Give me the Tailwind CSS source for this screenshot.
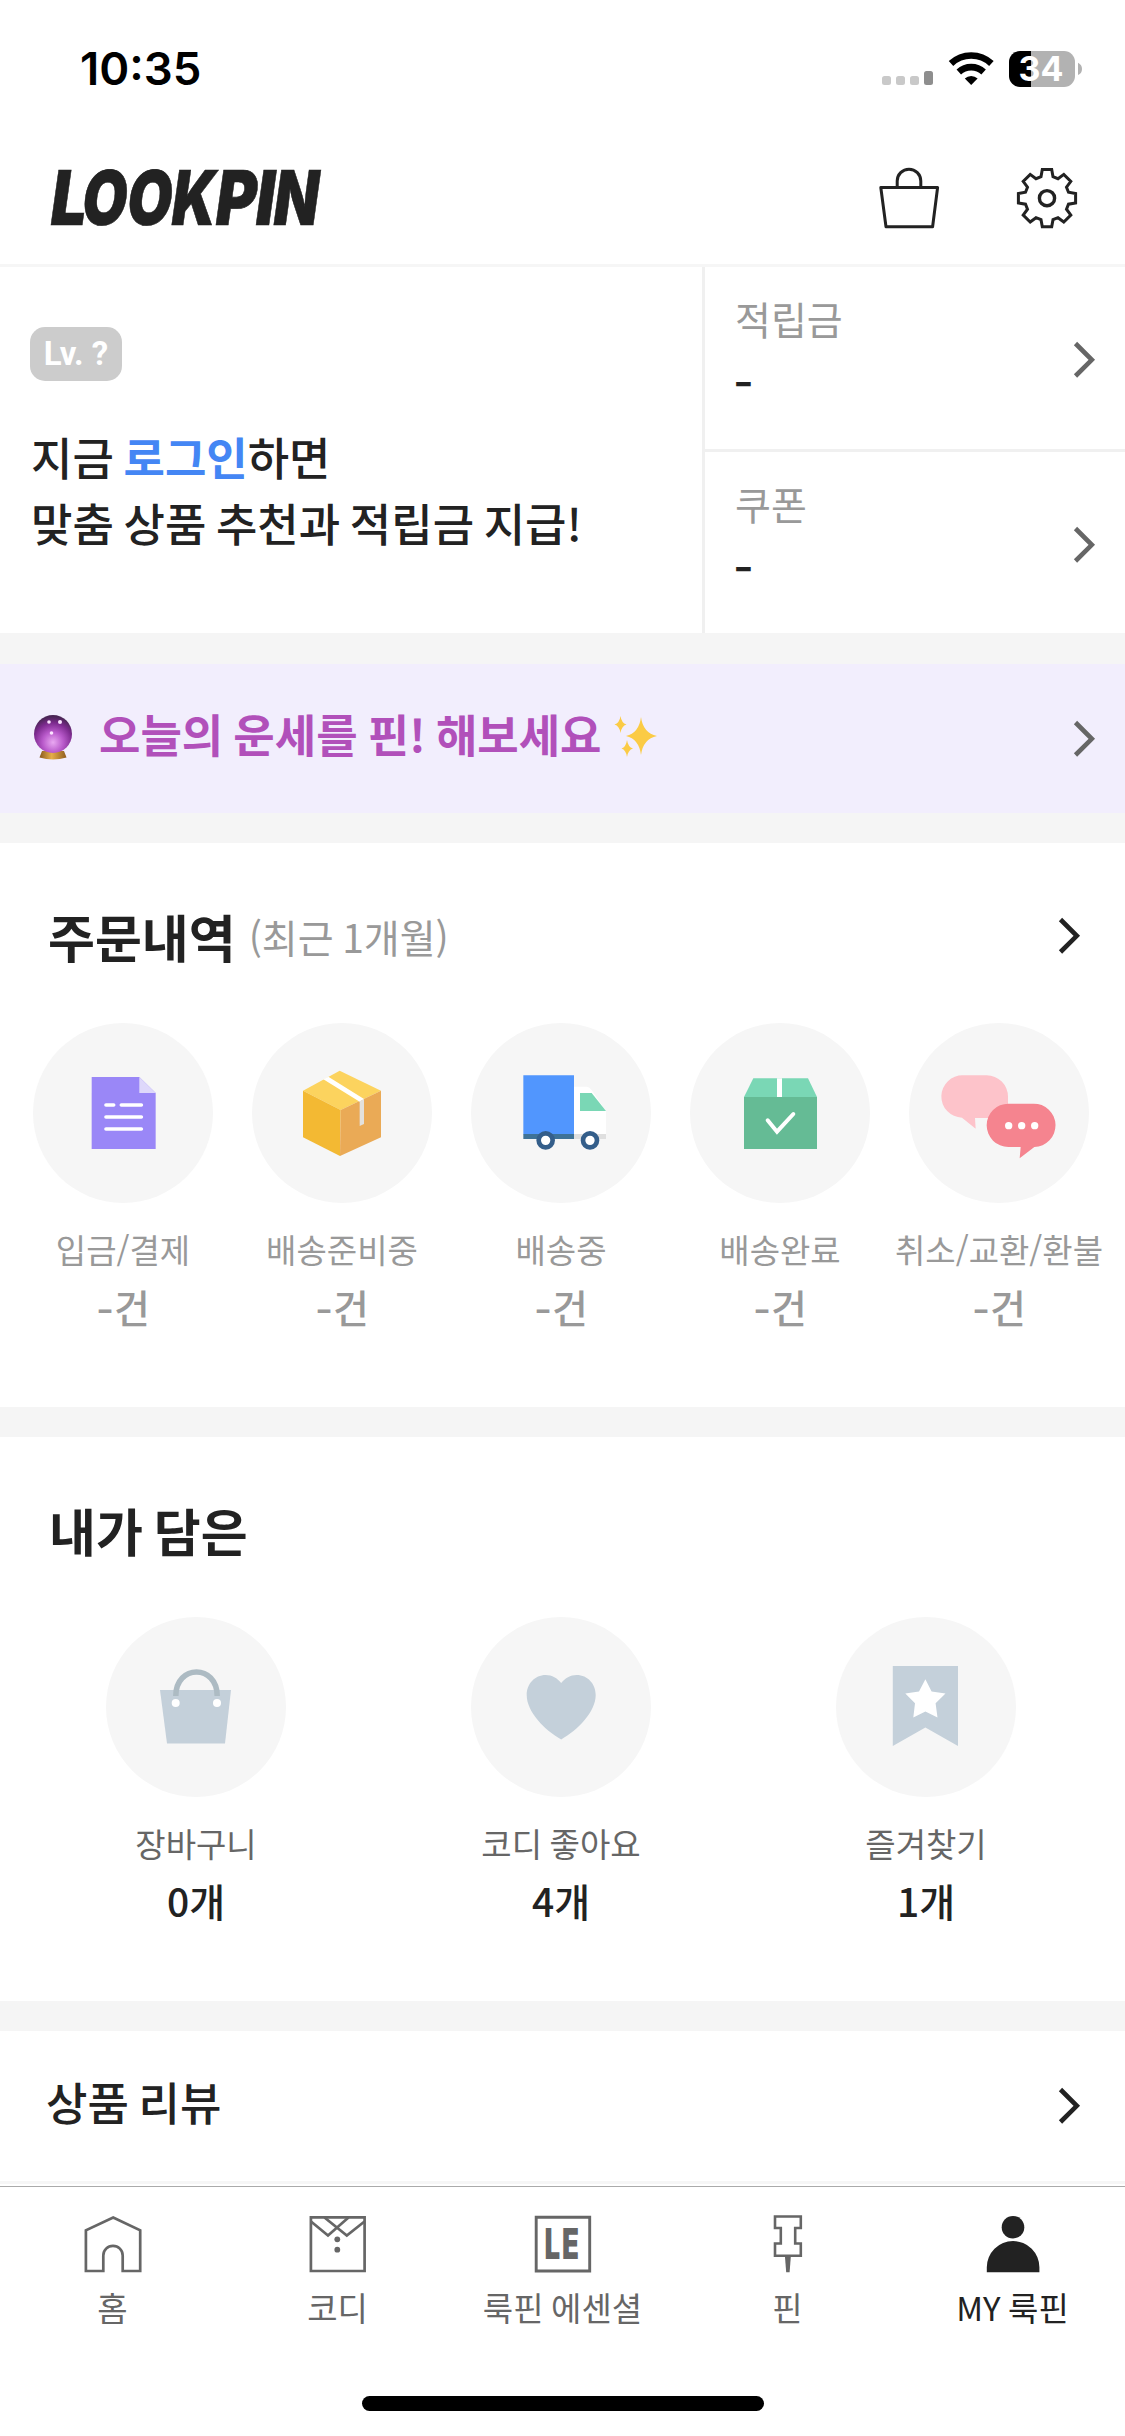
<!DOCTYPE html>
<html lang="ko">
<head>
<meta charset="utf-8">
<title>MY 룩핀</title>
<script src="https://cdn.jsdelivr.net/npm/@tailwindcss/browser@4"></script>
</head>
<body class="bg-white">
<div class="flex h-[2436px] w-[1125px] flex-col overflow-hidden bg-white font-['Noto_Sans_CJK_KR',sans-serif] text-[#222]">

  <!-- Status bar -->
  <div class="flex h-[132px] shrink-0 items-start justify-between pr-[43px] pl-[80px]">
    <div class="mt-[41px] font-['Inter',sans-serif] text-[45.5px] leading-[56px] font-semibold text-black">10:35</div>
    <svg class="mt-[46px] h-[46px] w-[201px]" viewBox="881 46 201 46">
      <g fill="#c9c9c9"><rect x="882" y="76" width="9" height="9" rx="2.5"/><rect x="896" y="76" width="9" height="9" rx="2.5"/><rect x="910" y="76" width="9" height="9" rx="2.5"/></g>
      <rect x="924" y="71" width="9" height="14" rx="2.5" fill="#8e8e8e"/>
      <g fill="none" stroke="#000" stroke-width="6.6">
        <path d="M951 63.5a29.5 29.5 0 0 1 40.4 0"/>
        <path d="M958.8 72a18.2 18.2 0 0 1 24.8 0"/>
      </g>
      <path d="M971.2 85l-6.4-6.4a9.4 9.4 0 0 1 12.8 0z"/>
      <path d="M1020 51h11v36h-11a11 11 0 0 1-11-11V62a11 11 0 0 1 11-11z"/>
      <path d="M1031 51h33a11 11 0 0 1 11 11v14a11 11 0 0 1-11 11h-33z" fill="#b2b2b2"/>
      <path d="M1078 62.7q4 2 4 6.2t-4 6.2z" fill="#b2b2b2"/>
      <text x="1041" y="81.3" text-anchor="middle" font-family="Inter" font-weight="700" font-size="34" fill="#fff">34</text>
    </svg>
  </div>

  <!-- App header -->
  <header class="flex h-[135px] shrink-0 items-start justify-between border-b-[3px] border-[#f6f6f6] pr-[47px] pl-[50px]">
    <svg class="mt-[17px] h-[98px] w-[290px] overflow-visible" viewBox="50 149 290 98" aria-label="LOOKPIN">
      <g font-family="Inter" font-weight="900" font-size="75.500" fill="#222" stroke="#222" stroke-width=".6" transform="translate(0 225) skewX(-8)">
        <text x="48" textLength="36" lengthAdjust="spacingAndGlyphs">L</text>
        <text x="79.500" textLength="45" lengthAdjust="spacingAndGlyphs">O</text>
        <text x="124.500" textLength="45" lengthAdjust="spacingAndGlyphs">O</text>
        <text x="169" textLength="44" lengthAdjust="spacingAndGlyphs">K</text>
        <text x="213" textLength="41" lengthAdjust="spacingAndGlyphs">P</text>
        <text x="253" textLength="19" lengthAdjust="spacingAndGlyphs">I</text>
        <text x="271" textLength="45" lengthAdjust="spacingAndGlyphs">N</text>
      </g>
    </svg>
    <div class="mt-[35px] flex gap-[76px]">
      <svg class="h-[63px] w-[62px]" viewBox="878 167 62 63" fill="none" stroke="#222" stroke-width="3">
        <path d="M880.8 187.5h56.8l-5 39.3h-46.6z" stroke-linejoin="round"/>
        <path d="M897.2 187v-6a11.8 11.8 0 0 1 23.6 0v6"/>
      </svg>
      <svg class="h-[63px] w-[62px]" viewBox="-31 -31.2 62 63" fill="none" stroke="#222" stroke-width="3">
        <path d="M-4.7-28.6H4.7L6-21.5 11-19.5 16.8-23.8 23.8-16.8 19.5-11 21.5-6 28.6-4.7V4.7L21.5 6 19.5 11 23.8 16.8 16.8 23.8 11 19.5 6 21.5 4.7 28.6H-4.7L-6 21.5-11 19.5-16.8 23.8-23.8 16.8-19.5 11-21.5 6-28.6 4.7V-4.7L-21.5-6-19.5-11-23.8-16.8-16.8-23.8-11-19.5-6-21.5z"/>
        <circle r="7.6" stroke-width="3.4"/>
      </svg>
    </div>
  </header>

  <!-- Profile -->
  <section class="flex h-[366px] shrink-0">
    <div class="flex w-[702px] flex-col items-start pt-[60px] pl-[30px]">
      <span class="h-[54px] w-[92px] rounded-[15px] bg-[#ccc] text-center font-['Roboto',sans-serif] text-[33px] leading-[54px] font-bold text-white">Lv. ?</span>
      <p class="mt-[43px] pl-[1px] text-[45px] leading-[66px] font-medium [word-spacing:-0.065em]">지금 <a class="font-bold text-[#4486f4]">로그인</a>하면<br>맞춤 상품 추천과 적립금 지급!</p>
    </div>
    <div class="flex flex-1 flex-col border-l-[3px] border-[#f0f0f0]">
      <div class="flex h-[185px] items-start justify-between border-b-[3px] border-[#f0f0f0] pr-[28px] pl-[30px]">
        <div class="pt-[23px]">
          <div class="text-[39px] leading-[56px] text-[#999]">적립금</div>
          <div class="text-[45px] leading-[66px] font-medium"><span class="-ml-[2px] font-['Inter']">-</span></div>
        </div>
        <svg class="mt-[73px] h-[40px] w-[24px]" viewBox="0 0 24 40" fill="none" stroke="#666" stroke-width="4.6"><path d="M2.5 3.5l16.3 16.3L2.5 36"/></svg>
      </div>
      <div class="flex h-[181px] items-start justify-between pr-[28px] pl-[30px]">
        <div class="pt-[23px]">
          <div class="text-[39px] leading-[56px] text-[#999]">쿠폰</div>
          <div class="text-[45px] leading-[66px] font-medium"><span class="-ml-[2px] font-['Inter']">-</span></div>
        </div>
        <svg class="mt-[73px] h-[40px] w-[24px]" viewBox="0 0 24 40" fill="none" stroke="#666" stroke-width="4.6"><path d="M2.5 3.5l16.3 16.3L2.5 36"/></svg>
      </div>
    </div>
  </section>

  <!-- Fortune banner -->
  <section class="box-content flex h-[149px] shrink-0 items-center border-t-[31px] border-b-[30px] border-[#f5f5f5] bg-[#f2eefd] pl-[33px]">
    <svg class="mb-[4px] h-[46px] w-[40px]" viewBox="0 0 40 46">
      <defs>
        <radialGradient id="ball" cx=".5" cy=".72" r=".68"><stop offset="0" stop-color="#e9a8f2"/><stop offset=".4" stop-color="#b95acb"/><stop offset=".75" stop-color="#7d2a8f"/><stop offset="1" stop-color="#4a2555"/></radialGradient>
        <linearGradient id="stand"><stop offset="0" stop-color="#8a5a1c"/><stop offset=".45" stop-color="#e5ae49"/><stop offset="1" stop-color="#8f5b1e"/></linearGradient>
      </defs>
      <path d="M9 37h22l2.500 6.500q-13.500 4-27 0z" fill="url(#stand)"/>
      <circle cx="20" cy="20" r="19" fill="url(#ball)"/>
      <g fill="#fbe4ff"><circle cx="16" cy="8" r="1.800"/><circle cx="27" cy="8" r="2"/><circle cx="18.500" cy="19" r="1.800"/></g>
    </svg>
    <p class="ml-[26px] pb-[9px] text-[45px] leading-[60px] font-bold whitespace-nowrap text-[#b150ba] [word-spacing:-0.055em]">오늘의 운세를 핀! 해보세요</p>
    <svg class="mb-[6px] ml-[11px] h-[44px] w-[44px]" viewBox="0 0 44 44" fill="#fbcb45">
      <path d="M28 3q2 16 16 19-14 3-16 19-2-16-15-19 13-3 15-19z"/>
      <path d="M7.500 2q1 7 6 8.500-5 1.500-6 8.500-1-7-6-8.500 5-1.500 6-8.500z"/>
      <path d="M14 26q1 7 6 8.500-5 1.500-6 8.500-1-7-5.500-8.500 4.500-1.500 5.500-8.500z"/>
    </svg>
    <svg class="mr-[28px] ml-auto h-[40px] w-[24px]" viewBox="0 0 24 40" fill="none" stroke="#666" stroke-width="4.6"><path d="M2.5 3.5l16.3 16.3L2.5 36"/></svg>
  </section>

  <!-- Orders -->
  <section class="h-[564px] shrink-0 pt-[53px]">
    <div class="flex h-[80px] items-center pr-[43px] pl-[48px]">
      <h2 class="text-[51px] font-bold">주문내역</h2>
      <span class="ml-[13px] text-[39px] text-[#999] [word-spacing:-0.06em]">(최근 1개월)</span>
      <svg class="ml-auto h-[40px] w-[24px]" viewBox="0 0 24 40" fill="none" stroke="#222" stroke-width="4.6"><path d="M2.5 3.5l16.3 16.3L2.5 36"/></svg>
    </div>
    <div class="mt-[47px] grid w-[1108.5px] grid-cols-5 pl-[13.5px] text-center text-[#999]">
      <div class="flex flex-col items-center">
        <svg class="size-[180px] rounded-full bg-[#f6f6f6]" viewBox="99 69 540 540">
          <path d="M275 231h143l49 48v168H275z" fill="#9a87f7"/>
          <path d="M418 231l49 48h-49z" fill="#ded8fb"/>
          <path d="M318 315h23M364 315h60M318 351h106M318 387h106" stroke="#fff" stroke-width="11" stroke-linecap="round"/>
        </svg>
        <div class="mt-[22px] text-[33px] leading-[48px] whitespace-nowrap">입금/결제</div>
        <div class="h-[66px] text-[39px] leading-[66px] font-medium"><span class="font-['Inter']">-</span>건</div>
      </div>
      <div class="flex flex-col items-center">
        <svg class="size-[180px] rounded-full bg-[#f6f6f6]" viewBox="756 69 540 540">
          <path d="M1019 212l124 60-121 58-113-58z" fill="#fcd35e"/>
          <path d="M909 272l113 58-2 138-111-56z" fill="#f3b933"/>
          <path d="M1143 272v140l-123 56 2-138z" fill="#eaaa56"/>
          <path d="M970 238l15-8 107 67-13 8z" fill="#fff"/>
          <path d="M1079 304l13-7v75l-13 6z" fill="#e3e1dd"/>
        </svg>
        <div class="mt-[22px] text-[33px] leading-[48px] whitespace-nowrap">배송준비중</div>
        <div class="h-[66px] text-[39px] leading-[66px] font-medium"><span class="font-['Inter']">-</span>건</div>
      </div>
      <div class="flex flex-col items-center">
        <svg class="size-[180px] rounded-full bg-[#f6f6f6]" viewBox="63 69 540 540">
          <path d="M220 226h152v177H220z" fill="#5196fe"/>
          <path d="M220 402h152v15H220z" fill="#3e7297"/>
          <path d="M372 260h38q8 0 14 9l44 64v70h-96z" fill="#fff"/>
          <path d="M372 402h96v15h-96z" fill="#dfdfdf"/>
          <path d="M390 279h35l43 54h-78z" fill="#7ad7b5"/>
          <g fill="#fff" stroke="#345e8a" stroke-width="14"><circle cx="287" cy="421" r="21"/><circle cx="420" cy="421" r="21"/></g>
        </svg>
        <div class="mt-[22px] text-[33px] leading-[48px] whitespace-nowrap">배송중</div>
        <div class="h-[66px] text-[39px] leading-[66px] font-medium"><span class="font-['Inter']">-</span>건</div>
      </div>
      <div class="flex flex-col items-center">
        <svg class="size-[180px] rounded-full bg-[#f6f6f6]" viewBox="720 69 540 540">
          <path d="M910 235h164l27 56H882z" fill="#7ad7b5"/>
          <path d="M981 235h15v56h-15z" fill="#fff"/>
          <path d="M882 291h219v156H882z" fill="#65bb95"/>
          <path d="M953 361l28 34 49-53" fill="none" stroke="#fff" stroke-width="12" stroke-linecap="round"/>
        </svg>
        <div class="mt-[22px] text-[33px] leading-[48px] whitespace-nowrap">배송완료</div>
        <div class="h-[66px] text-[39px] leading-[66px] font-medium"><span class="font-['Inter']">-</span>건</div>
      </div>
      <div class="flex flex-col items-center">
        <svg class="size-[180px] rounded-full bg-[#f6f6f6]" viewBox="177 429 540 540">
          <path d="M339 586h71a64 64 0 0 1 64 64v64h-99l2 32-41-33a63.500 63.500 0 0 1 3-127z" fill="#fdc3ca"/>
          <path d="M475 671h75a65 65 0 0 1 3 130l-44 34 3-34h-37a65 65 0 0 1 0-130z" fill="#f5848f"/>
          <g fill="#fff"><circle cx="476" cy="737" r="11"/><circle cx="515" cy="737" r="11"/><circle cx="554" cy="737" r="11"/></g>
        </svg>
        <div class="mt-[22px] text-[33px] leading-[48px] whitespace-nowrap">취소/교환/환불</div>
        <div class="h-[66px] text-[39px] leading-[66px] font-medium"><span class="font-['Inter']">-</span>건</div>
      </div>
    </div>
  </section>

  <!-- Saved items -->
  <section class="box-content h-[511px] shrink-0 border-t-[30px] border-b-[30px] border-[#f5f5f5] pt-[53px]">
    <h2 class="h-[80px] pl-[49px] text-[51px] leading-[80px] font-bold [word-spacing:-0.065em]">내가 담은</h2>
    <div class="mt-[47px] grid w-[1108.5px] grid-cols-3 pl-[13.5px] text-center">
      <div class="flex flex-col items-center">
        <svg class="size-[180px] rounded-full bg-[#f6f6f6]" viewBox="106 1617 180 180">
          <path d="M160 1690h71l-6 53.600h-58z" fill="#c4d0da"/>
          <path d="M175.800 1696c0-32 41.400-32 41.400 0" fill="none" stroke="#adbbc3" stroke-width="5.500"/>
          <g fill="#fff"><circle cx="175.700" cy="1703" r="4"/><circle cx="217" cy="1703" r="4"/></g>
        </svg>
        <div class="mt-[22px] text-[33px] leading-[48px] text-[#666]">장바구니</div>
        <div class="text-[39px] leading-[66px] font-medium">0개</div>
      </div>
      <div class="flex flex-col items-center">
        <svg class="size-[180px] rounded-full bg-[#f6f6f6]" viewBox="471 1617 180 180">
          <path d="M561.200 1683c-4-5-9-8-15.500-8-11 0-19 9-19 20 0 17 18 35 34.500 44.500 16.500-9.500 34.500-27.500 34.500-44.500 0-11-8-20-19-20-6.500 0-11.500 3-15.500 8z" fill="#c4d0da"/>
        </svg>
        <div class="mt-[22px] text-[33px] leading-[48px] text-[#666] [word-spacing:-0.05em]">코디 좋아요</div>
        <div class="text-[39px] leading-[66px] font-medium">4개</div>
      </div>
      <div class="flex flex-col items-center">
        <svg class="size-[180px] rounded-full bg-[#f6f6f6]" viewBox="836 1617 180 180">
          <path d="M892.800 1666H958v80l-32.600-18.500-32.600 18.500z" fill="#c4d0da"/>
          <path d="M925.400 1679.300l6.200 12.300 13.900 1.900-9.900 9.700 1.900 14.300-12.100-6-12.100 6 1.700-14.300-9.700-9.700 13.700-1.900z" fill="#fff"/>
        </svg>
        <div class="mt-[22px] text-[33px] leading-[48px] text-[#666]">즐겨찾기</div>
        <div class="text-[39px] leading-[66px] font-medium">1개</div>
      </div>
    </div>
  </section>

  <!-- Reviews -->
  <section class="flex h-[153px] shrink-0 items-center justify-between border-b-[3px] border-[#f6f6f6] pr-[43px] pl-[46px]">
    <h2 class="pb-[9px] text-[45px] leading-[60px] font-medium [word-spacing:-0.065em]">상품 리뷰</h2>
    <svg class="h-[40px] w-[24px]" viewBox="0 0 24 40" fill="none" stroke="#222" stroke-width="4.6"><path d="M2.500 3.500l16.300 16.300L2.500 36"/></svg>
  </section>

  <!-- Tab bar -->
  <nav class="mt-[2px] grid h-[210px] shrink-0 grid-cols-5 border-t border-[#aaa] pt-[27px] text-[33px] leading-[48px] text-[#666] [word-spacing:-0.05em]">
    <a class="flex flex-col items-center gap-[9px]">
      <svg class="h-[60px] w-[60px]" viewBox="82.500 2214 60 60" fill="none" stroke="#666" stroke-width="2.700"><path d="M85.400 2271V2230.300L112.700 2217.500 139.700 2230.300V2271H122.200V2255.500a9.700 9.700 0 0 0-19.400 0V2271z"/></svg>
      홈</a>
    <a class="flex flex-col items-center gap-[9px]">
      <svg class="h-[60px] w-[60px]" viewBox="308 2214 60 60" fill="none" stroke="#666" stroke-width="2.700">
        <path d="M310.900 2217.300h53.700V2271H310.900z"/>
        <path d="M311 2221.500L328 2235.500 348.500 2217.500M364.500 2221.500L346.800 2235.500 324.500 2217.500"/>
        <g fill="#666" stroke="none"><circle cx="337.300" cy="2239.300" r="2.900"/><circle cx="337.300" cy="2249.700" r="2.900"/></g>
      </svg>
      코디</a>
    <a class="flex flex-col items-center gap-[9px]">
      <svg class="h-[60px] w-[60px]" viewBox="532.500 2214 60 60" fill="none" stroke="#666" stroke-width="2.900">
        <path d="M535.700 2217.300h53.500V2271h-53.500z"/>
        <text x="544" y="2259" textLength="36.500" lengthAdjust="spacingAndGlyphs" letter-spacing="3" font-family="Inter" font-weight="900" font-size="42.500" fill="#666" stroke="none">LE</text>
      </svg>
      룩핀 에센셜</a>
    <a class="flex flex-col items-center gap-[9px]">
      <svg class="h-[60px] w-[60px]" viewBox="757.500 2214 60 60" fill="none" stroke="#666" stroke-width="2.600">
        <path d="M774.500 2216.500h25.800v11.500h-5.600v15.500h5.600v12.300h-25.800v-12.300h5.800V2228h-5.800z"/>
        <path d="M784.500 2257h5.800l-1.200 15.300h-3.400z" fill="#666" stroke="none"/>
      </svg>
      핀</a>
    <a class="flex flex-col items-center gap-[9px] text-[#222]">
      <svg class="h-[60px] w-[60px]" viewBox="982.500 2214 60 60" fill="#222"><circle cx="1012.500" cy="2227.200" r="11.300"/><path d="M986.300 2272.300v-5a26.300 26.300 0 0 1 52.600 0v5z"/></svg>
      MY 룩핀</a>
  </nav>
  <div class="mx-auto h-[15px] w-[402px] shrink-0 rounded-full bg-black"></div>
</div>
</body>
</html>
